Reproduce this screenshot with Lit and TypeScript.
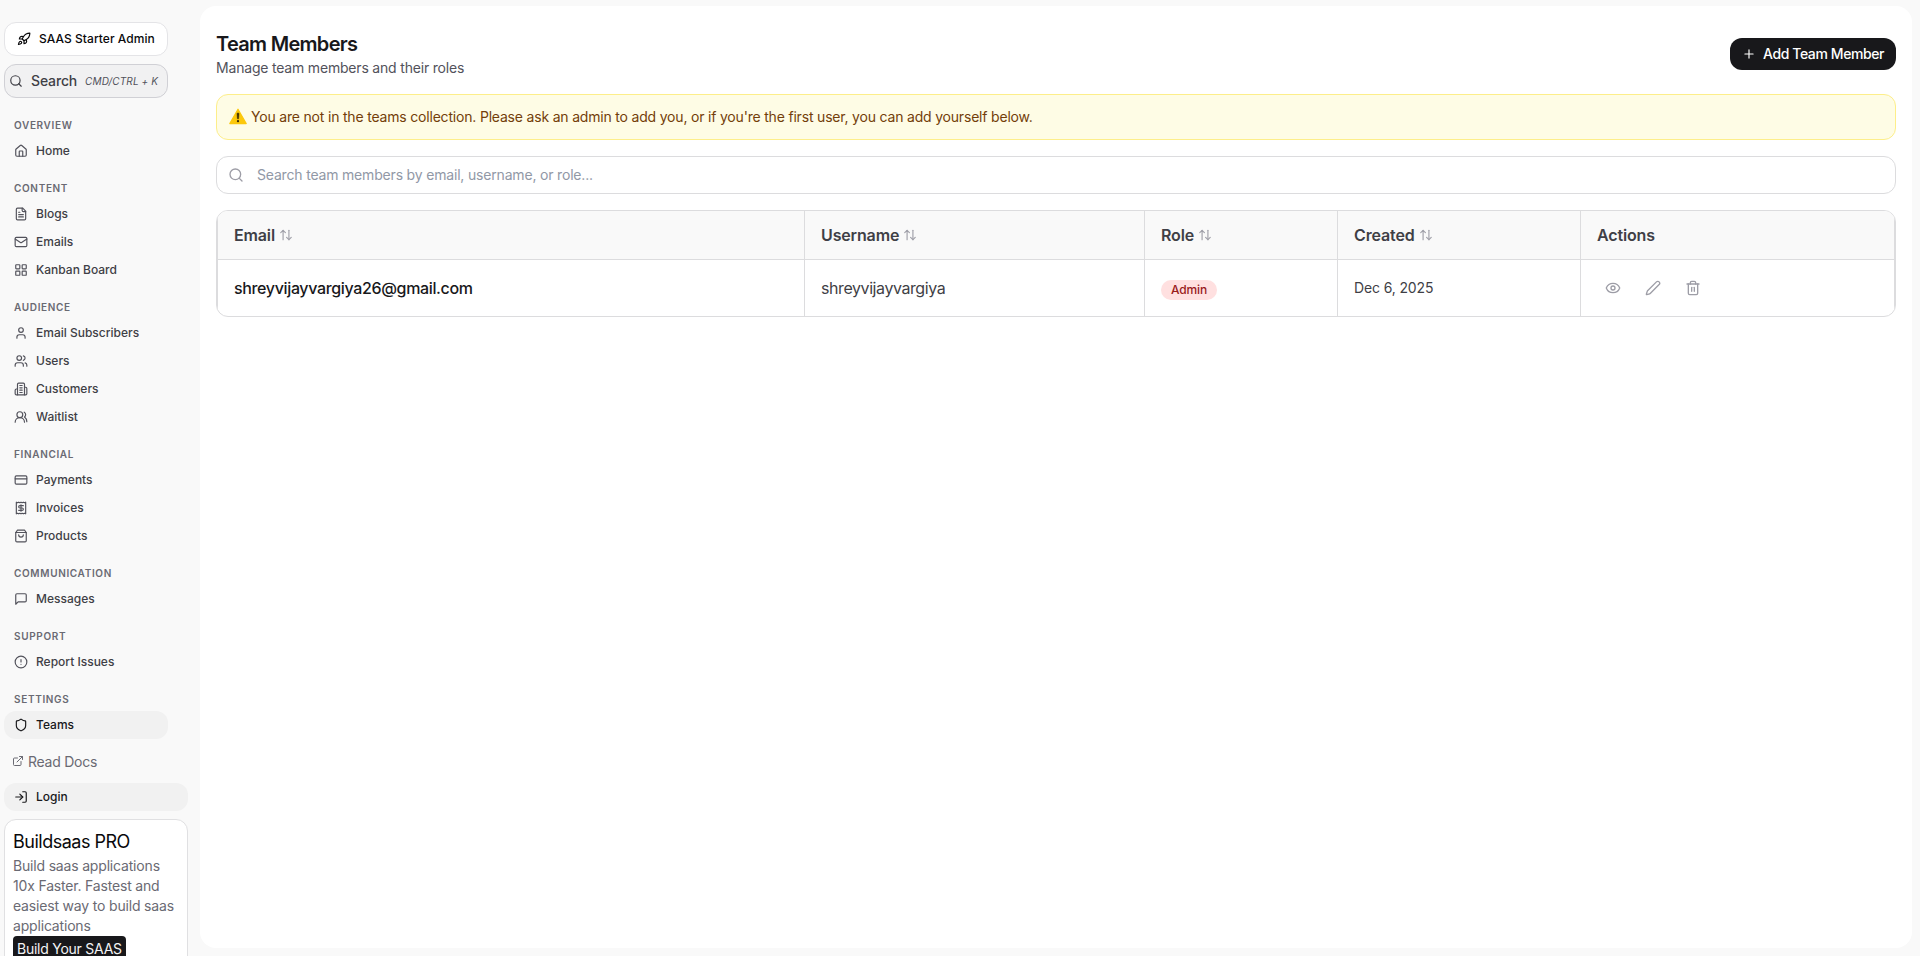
import { LitElement, html, css, svg } from "lit";
import { customElement, property } from "lit/decorators.js";

const p = (...ds: string[]) => ds.map((d) => svg`<path d=${d}></path>`);

const icons: Record<string, unknown> = {
  rocket: p(
    "M4.5 16.5c-1.5 1.26-2 5-2 5s3.74-.5 5-2c.71-.84.7-2.13-.09-2.91a2.18 2.18 0 0 0-2.91-.09z",
    "m12 15-3-3a22 22 0 0 1 2-3.95A12.88 12.88 0 0 1 22 2c0 2.72-.78 7.5-6 11a22.35 22.35 0 0 1-4 2z",
    "M9 12H4s.55-3.03 2-4c1.62-1.08 5 0 5 0",
    "M12 15v5s3.03-.55 4-2c1.08-1.62 0-5 0-5"
  ),
  search: svg`<circle cx="11" cy="11" r="8"></circle><path d="m21 21-4.3-4.3"></path>`,
  home: p(
    "M15 21v-8a1 1 0 0 0-1-1h-4a1 1 0 0 0-1 1v8",
    "M3 10a2 2 0 0 1 .709-1.528l7-5.999a2 2 0 0 1 2.582 0l7 5.999A2 2 0 0 1 21 10v9a2 2 0 0 1-2 2H5a2 2 0 0 1-2-2z"
  ),
  file: p(
    "M15 2H6a2 2 0 0 0-2 2v16a2 2 0 0 0 2 2h12a2 2 0 0 0 2-2V7Z",
    "M14 2v4a2 2 0 0 0 2 2h4",
    "M10 9H8",
    "M16 13H8",
    "M16 17H8"
  ),
  mail: svg`<rect width="20" height="16" x="2" y="4" rx="2"></rect><path d="m22 7-8.97 5.7a1.94 1.94 0 0 1-2.06 0L2 7"></path>`,
  grid: svg`<rect width="7" height="7" x="3" y="3" rx="1"></rect><rect width="7" height="7" x="14" y="3" rx="1"></rect><rect width="7" height="7" x="14" y="14" rx="1"></rect><rect width="7" height="7" x="3" y="14" rx="1"></rect>`,
  user: svg`<path d="M19 21v-2a4 4 0 0 0-4-4H9a4 4 0 0 0-4 4v2"></path><circle cx="12" cy="7" r="4"></circle>`,
  users: svg`<path d="M16 21v-2a4 4 0 0 0-4-4H6a4 4 0 0 0-4 4v2"></path><circle cx="9" cy="7" r="4"></circle><path d="M22 21v-2a4 4 0 0 0-3-3.87"></path><path d="M16 3.13a4 4 0 0 1 0 7.75"></path>`,
  building: p(
    "M6 22V4a2 2 0 0 1 2-2h8a2 2 0 0 1 2 2v18Z",
    "M6 12H4a2 2 0 0 0-2 2v6a2 2 0 0 0 2 2h2",
    "M18 9h2a2 2 0 0 1 2 2v9a2 2 0 0 1-2 2h-2",
    "M10 6h4",
    "M10 10h4",
    "M10 14h4",
    "M10 18h4"
  ),
  usersRound: svg`<path d="M18 21a8 8 0 0 0-16 0"></path><circle cx="10" cy="8" r="5"></circle><path d="M22 20c0-3.37-2-6.5-4-8a5 5 0 0 0-.45-8.3"></path>`,
  card: svg`<rect width="20" height="14" x="2" y="5" rx="2"></rect><path d="M2 10h20"></path>`,
  receipt: p(
    "M4 2v20l2-1 2 1 2-1 2 1 2-1 2 1 2-1 2 1V2l-2 1-2-1-2 1-2-1-2 1-2-1-2 1Z",
    "M16 8h-6a2 2 0 1 0 0 4h4a2 2 0 1 1 0 4H8",
    "M12 17.5v-11"
  ),
  bag: p("M6 2 3 6v14a2 2 0 0 0 2 2h14a2 2 0 0 0 2-2V6l-3-4Z", "M3 6h18", "M16 10a4 4 0 0 1-8 0"),
  message: p("M21 15a2 2 0 0 1-2 2H7l-4 4V5a2 2 0 0 1 2-2h14a2 2 0 0 1 2 2z"),
  alert: svg`<circle cx="12" cy="12" r="10"></circle><path d="M12 8v4"></path><path d="M12 16h.01"></path>`,
  shield: p(
    "M20 13c0 5-3.5 7.5-7.66 8.95a1 1 0 0 1-.67-.01C7.5 20.5 4 18 4 13V6a1 1 0 0 1 1-1c2 0 4.5-1.2 6.24-2.72a1.17 1.17 0 0 1 1.52 0C14.51 3.81 17 5 19 5a1 1 0 0 1 1 1z"
  ),
  external: p("M15 3h6v6", "M10 14 21 3", "M18 13v6a2 2 0 0 1-2 2H5a2 2 0 0 1-2-2V8a2 2 0 0 1 2-2h6"),
  login: p("M15 3h4a2 2 0 0 1 2 2v14a2 2 0 0 1-2 2h-4", "m10 17 5-5-5-5", "M15 12H3"),
  plus: p("M5 12h14", "M12 5v14"),
  sort: p("m21 16-4 4-4-4", "M17 20V4", "m3 8 4-4 4 4", "M7 4v16"),
  eye: svg`<path d="M2.062 12.348a1 1 0 0 1 0-.696 10.75 10.75 0 0 1 19.876 0 1 1 0 0 1 0 .696 10.75 10.75 0 0 1-19.876 0"></path><circle cx="12" cy="12" r="3"></circle>`,
  pencil: p(
    "M21.174 6.812a1 1 0 0 0-3.986-3.987L3.842 16.174a2 2 0 0 0-.5.83l-1.321 4.352a.5.5 0 0 0 .623.622l4.353-1.32a2 2 0 0 0 .83-.497z"
  ),
  trash: p(
    "M3 6h18",
    "M19 6v14c0 1-1 2-2 2H7c-1 0-2-1-2-2V6",
    "M8 6V4c0-1 1-2 2-2h4c1 0 2 1 2 2v2",
    "M10 11v6",
    "M14 11v6"
  ),
};

@customElement("ui-icon")
class UiIcon extends LitElement {
  @property() name = "";
  @property({ type: Number }) size = 14;
  @property({ type: Number }) weight = 2;
  static styles = css`
    :host { display: inline-flex; flex: none; }
    svg { display: block; fill: none; stroke: currentColor; stroke-linecap: round; stroke-linejoin: round; }
  `;
  render() {
    return html`<svg width=${this.size} height=${this.size} viewBox="0 0 24 24" stroke-width=${this.weight}>${icons[this.name]}</svg>`;
  }
}

const groups: [string, [string, string][]][] = [
  ["Overview", [["home", "Home"]]],
  ["Content", [["file", "Blogs"], ["mail", "Emails"], ["grid", "Kanban Board"]]],
  ["Audience", [["user", "Email Subscribers"], ["users", "Users"], ["building", "Customers"], ["usersRound", "Waitlist"]]],
  ["Financial", [["card", "Payments"], ["receipt", "Invoices"], ["bag", "Products"]]],
  ["Communication", [["message", "Messages"]]],
  ["Support", [["alert", "Report Issues"]]],
  ["Settings", [["shield", "Teams"]]],
];

@customElement("side-bar")
class SideBar extends LitElement {
  static styles = css`
    :host { display: flex; flex-direction: column; width: 184px; padding: 22px 12px 0 4px; flex: none; }
    :host > * { flex: none; }
    .top { width: 164px; display: flex; flex-direction: column; gap: 8px; }
    .brand, .search { box-sizing: border-box; height: 34px; border-radius: 12px; display: flex; align-items: center; white-space: nowrap; }
    .brand { border: 1px solid #e4e4e7; background: #fff; color: #09090b; font-size: 12px; font-weight: 500; padding-left: 12px; gap: 8px; letter-spacing: 0.05px; }
    .search { border: 1px solid #d0d0d5; background: #f1f1f2; color: #3f3f46; font-size: 14px; font-weight: 500; padding-left: 4px; gap: 8px; letter-spacing: -0.15px; }
    kbd { font: italic 400 10px Inter, sans-serif; color: #52525b; letter-spacing: 0.12px; }
    nav { width: 164px; margin-top: 20px; display: flex; flex-direction: column; gap: 16px; }
    .label { height: 15px; line-height: 15px; margin-bottom: 4px; padding-left: 10px; font-size: 10px; font-weight: 600; letter-spacing: 0.66px; color: #6a6a73; text-transform: uppercase; }
    .item { height: 28px; display: flex; align-items: center; gap: 8px; padding-left: 10px; border-radius: 12px; font-size: 12px; font-weight: 500; color: #3f3f46; }
    .item span, .brand span, .search span { padding-bottom: 2px; }
    .item ui-icon { color: #52525b; }
    .active, .active ui-icon { color: #18181b; }
    .active { background: #f1f1f1; }
    .docs { height: 20px; margin: 12px 0 12px 8px; display: flex; align-items: center; gap: 4px; font-size: 14px; color: #6a6a73; letter-spacing: -0.25px; }
    .card { box-sizing: border-box; margin-top: 8px; padding: 8px; height: 170px; border: 1px solid #e0e0e2; border-radius: 12px; background: #fff; white-space: nowrap; }
    .title { font-size: 18px; line-height: 28px; color: #09090b; letter-spacing: -0.5px; }
    .text { font-size: 14px; line-height: 20px; color: #6a6a73; letter-spacing: -0.18px; }
    .cta { display: inline-block; background: #18181b; color: #f4f4f5; font-size: 14px; line-height: 20px; padding: 3px 4px; border-radius: 4px; letter-spacing: -0.25px; }
  `;
  render() {
    return html`
      <div class="top">
        <div class="brand"><ui-icon name="rocket"></ui-icon><span>SAAS Starter Admin</span></div>
        <div class="search"><ui-icon name="search"></ui-icon><span>Search</span><kbd>CMD/CTRL + K</kbd></div>
      </div>
      <nav>
        ${groups.map(
          ([label, items]) => html`<div>
            <div class="label">${label}</div>
            ${items.map(
              ([icon, text]) => html`<div class="item ${text === "Teams" ? "active" : ""}"><ui-icon name=${icon}></ui-icon><span>${text}</span></div>`
            )}
          </div>`
        )}
      </nav>
      <div class="docs"><ui-icon name="external" size="12"></ui-icon>Read Docs</div>
      <div class="item active"><ui-icon name="login"></ui-icon><span>Login</span></div>
      <div class="card">
        <div class="title">Buildsaas PRO</div>
        <div class="text">Build saas applications<br />10x Faster. Fastest and<br />easiest way to build saas<br />applications</div>
        <span class="cta">Build Your SAAS</span>
      </div>
    `;
  }
}

@customElement("team-table")
class TeamTable extends LitElement {
  static styles = css`
    :host { display: block; box-sizing: border-box; height: 107px; border: 1px solid #dcdcde; border-radius: 12px; overflow: hidden; }
    .row { display: grid; grid-template-columns: 587px 340px 193px 243px 1fr; border: solid #dcdcde; border-width: 0 1px; }
    .cell { box-sizing: border-box; display: flex; align-items: center; padding-left: 16px; border-right: 1px solid #dcdcde; color: #3f3f46; }
    .cell:last-child { border-right: 0; }
    .head .cell { height: 49px; border-bottom: 1px solid #dcdcde; background: #f9f9f9; font-size: 16px; font-weight: 600; gap: 4px; letter-spacing: -0.14px; }
    .head ui-icon { color: #a1a1aa; }
    .body .cell { height: 56px; font-size: 16px; letter-spacing: -0.42px; }
    .body .email { color: #18181b; font-weight: 500; letter-spacing: -0.35px; }
    .body .date { font-size: 14px; letter-spacing: -0.14px; padding-bottom: 1px; }
    .badge { margin-top: 3px; padding: 2px 10px; line-height: 16px; border-radius: 10px; background: #ffe0e0; color: #991b1b; font-size: 12px; font-weight: 500; letter-spacing: -0.15px; }
    .actions { gap: 24px; }
    .body .actions { padding-left: 24px; color: #9d9da6; }
  `;
  render() {
    return html`
      <div class="row head">
        ${["Email", "Username", "Role", "Created"].map((t) => html`<div class="cell">${t} <ui-icon name="sort"></ui-icon></div>`)}
        <div class="cell">Actions</div>
      </div>
      <div class="row body">
        <div class="cell email">shreyvijayvargiya26@gmail.com</div>
        <div class="cell">shreyvijayvargiya</div>
        <div class="cell"><span class="badge">Admin</span></div>
        <div class="cell date">Dec 6, 2025</div>
        <div class="cell actions">
          <ui-icon name="eye" size="16"></ui-icon><ui-icon name="pencil" size="16"></ui-icon><ui-icon name="trash" size="16"></ui-icon>
        </div>
      </div>
    `;
  }
}

@customElement("app-root")
class AppRoot extends LitElement {
  static styles = css`
    :host { display: flex; box-sizing: border-box; width: 100vw; height: 100vh; overflow: hidden; background: #f9f9f9; font-family: Inter, sans-serif; }
    main { flex: 1; margin: 6px 8px 8px 0; box-sizing: border-box; padding: 24px 16px; background: #fff; border-radius: 16px; display: flex; flex-direction: column; }
    header { display: flex; justify-content: space-between; height: 64px; }
    h1 { margin: 0; font-size: 20px; line-height: 28px; font-weight: 600; letter-spacing: -0.7px; color: #18181b; }
    .sub { font-size: 14px; line-height: 20px; color: #52525b; letter-spacing: -0.19px; }
    .add { margin-top: 8px; box-sizing: border-box; width: 166px; height: 32px; border-radius: 12px; background: #18181b; color: #fff; display: flex; align-items: center; gap: 7px; padding-left: 12px; font-size: 14px; font-weight: 500; letter-spacing: -0.4px; white-space: nowrap; }
    .add span, .notice span, .find span { padding-bottom: 2px; }
    .notice { box-sizing: border-box; height: 46px; border: 1px solid #fdee8a; background: #fefce5; border-radius: 12px; padding-left: 12px; display: flex; align-items: center; gap: 4px; font-size: 14px; letter-spacing: -0.19px; color: #733e0a; }
    .notice svg { margin-bottom: 2px; }
    .find { box-sizing: border-box; height: 38px; margin: 16px 0; border: 1px solid #dcdcde; border-radius: 12px; padding-left: 11px; display: flex; align-items: center; gap: 13px; font-size: 14px; letter-spacing: -0.18px; color: #9198a6; }
    .find ui-icon { color: #9d9da6; }
  `;
  render() {
    return html`
      <side-bar></side-bar>
      <main>
        <header>
          <div><h1>Team Members</h1><div class="sub">Manage team members and their roles</div></div>
          <div class="add"><ui-icon name="plus"></ui-icon><span>Add Team Member</span></div>
        </header>
        <div class="notice">
          <svg width="18" height="17" viewBox="0 0 18 17">
            <path d="M9 1.2 17.2 15.6H.8Z" fill="#fcc80c" stroke="#fcc80c" stroke-width="1.2" stroke-linejoin="round"></path>
            <path d="M8 5.2h2l-.4 5.6H8.400Z" fill="#3a2c05" stroke="#3a2c05" stroke-width=".5" stroke-linejoin="round"></path>
            <circle cx="9" cy="13.200" r="1.150" fill="#3a2c05"></circle>
          </svg>
          <span>You are not in the teams collection. Please ask an admin to add you, or if you're the first user, you can add yourself below.</span>
        </div>
        <div class="find"><ui-icon name="search" size="16"></ui-icon><span>Search team members by email, username, or role...</span></div>
        <team-table></team-table>
      </main>
    `;
  }
}
